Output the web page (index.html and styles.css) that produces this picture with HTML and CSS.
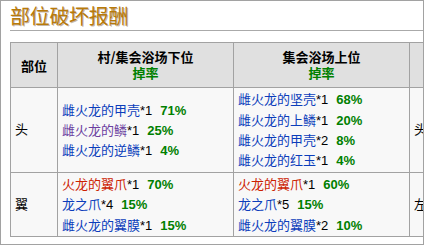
FILE: index.html
```html
<!DOCTYPE html>
<html lang="zh">
<head>
<meta charset="utf-8">
<link rel="stylesheet" href="styles.css">
</head>
<body>
<div class="box">
  <h2 class="title">部位破坏报酬</h2>
  <table class="drops">
    <colgroup>
      <col class="c-part"><col class="c-rank"><col class="c-rank"><col class="c-rank">
    </colgroup>
    <thead>
      <tr>
        <th>部位</th>
        <th><div class="hl">村/集会浴场下位</div><div class="hl rate">掉率</div></th>
        <th><div class="hl">集会浴场上位</div><div class="hl rate">掉率</div></th>
        <th></th>
      </tr>
    </thead>
    <tbody>
      <tr class="tall">
        <td>头</td>
        <td>
          <div><a class="lk">雌火龙的甲壳</a>*1<b class="pct">71%</b></div>
          <div><a class="lk visited">雌火龙的鳞</a>*1<b class="pct">25%</b></div>
          <div><a class="lk">雌火龙的逆鳞</a>*1<b class="pct">4%</b></div>
        </td>
        <td>
          <div><a class="lk">雌火龙的坚壳</a>*1<b class="pct">68%</b></div>
          <div><a class="lk">雌火龙的上鳞</a>*1<b class="pct">20%</b></div>
          <div><a class="lk">雌火龙的甲壳</a>*2<b class="pct">8%</b></div>
          <div><a class="lk">雌火龙的红玉</a>*1<b class="pct">4%</b></div>
        </td>
        <td>头</td>
      </tr>
      <tr>
        <td>翼</td>
        <td>
          <div><a class="lk new">火龙的翼爪</a>*1<b class="pct">70%</b></div>
          <div><a class="lk">龙之爪</a>*4<b class="pct">15%</b></div>
          <div><a class="lk">雌火龙的翼膜</a>*1<b class="pct">15%</b></div>
        </td>
        <td>
          <div><a class="lk new">火龙的翼爪</a>*1<b class="pct">60%</b></div>
          <div><a class="lk">龙之爪</a>*5<b class="pct">15%</b></div>
          <div><a class="lk">雌火龙的翼膜</a>*2<b class="pct">10%</b></div>
        </td>
        <td>左</td>
      </tr>
    </tbody>
  </table>
</div>
</body>
</html>
```

FILE: styles.css
```css
html, body {
  margin: 0;
  padding: 0;
  background: #ffffff;
}

body {
  font-family: "Liberation Sans", "Noto Sans CJK SC", sans-serif;
  font-size: 13px;
  color: #000;
}

.box {
  border: 1px solid #a2a2a2;
  overflow: hidden;
  padding-left: 9px;
  box-sizing: border-box;
  width: 424px;
  height: 245px;
}

.title {
  margin: 0;
  padding-top: 2px;
  height: 27px;
  line-height: 26px;
  font-family: "Noto Sans CJK SC", sans-serif;
  font-size: 20px;
  font-weight: normal;
  letter-spacing: -0.3px;
  color: #b87a0a;
  text-shadow: 1px 1px 0 rgba(90, 50, 0, 0.35);
  border-bottom: 1px solid #aaaaaa;
  white-space: nowrap;
}

.drops {
  margin-top: 11px;
  border-collapse: collapse;
  table-layout: fixed;
  width: 576px;
  background: #f8f8f8;
  font-family: "Liberation Sans", "Noto Sans CJK SC", sans-serif;
  font-size: 13px;
}

.c-part { width: 47px; }
.c-rank { width: 176px; }

.drops th,
.drops td {
  border: 1px solid #a2a2a2;
  white-space: nowrap;
  overflow: hidden;
}

.drops th {
  background: #e0e0e0;
  font-weight: bold;
  text-align: center;
  padding: 6px 4px;
  height: 32px;
  font-family: "Noto Sans CJK SC", sans-serif;
}

.hl {
  height: 16px;
  line-height: 16px;
}

.rate {
  color: #008000;
}

.drops td {
  padding: 1px 4px;
  line-height: 19.3px;
  vertical-align: middle;
}

.drops tr.tall td {
  height: 82px;
}

.lk {
  color: #0b3dbb;
  font-family: "Noto Sans CJK SC", sans-serif;
}

.lk.visited { color: #6b3fa0; }
.lk.new { color: #cc2200; }

.pct {
  color: #008000;
  font-weight: bold;
  margin-left: 8px;
  font-family: "Liberation Sans", sans-serif;
}
```
